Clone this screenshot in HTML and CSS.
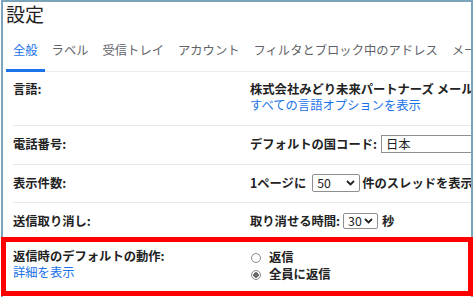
FILE: index.html
```html
<!DOCTYPE html>
<html lang="ja">
<head>
    <meta charset="UTF-8">
    <meta name="viewport" content="width=device-width, initial-scale=1.0">
    <title>設定</title>
    <link rel="stylesheet" href="styles.css">
</head>
<body>

    <div class="screen">
        <!-- Settings window -->
        <div class="window">
            <h1 class="title">設定</h1>

            <nav class="tabs">
                <a href="#" class="tab active">全般</a>
                <a href="#" class="tab">ラベル</a>
                <a href="#" class="tab">受信トレイ</a>
                <a href="#" class="tab">アカウント</a>
                <a href="#" class="tab">フィルタとブロック中のアドレス</a>
                <a href="#" class="tab">メール転送と POP/IMAP</a>
            </nav>

            <div class="row row-lang">
                <div class="label">言語:</div>
                <div class="value">
                    <div class="strong">株式会社みどり未来パートナーズ メール の表示言語:</div>
                    <a href="#" class="link">すべての言語オプションを表示</a>
                </div>
            </div>

            <div class="row row-phone">
                <div class="label">電話番号:</div>
                <div class="value inline">
                    <span class="strong">デフォルトの国コード:</span>
                    <span class="textbox">日本</span>
                </div>
            </div>

            <div class="row row-size">
                <div class="label">表示件数:</div>
                <div class="value inline">
                    <span class="strong">1ページに</span>
                    <span class="select select-50">50
                        <svg class="chevron" width="9" height="6" viewBox="0 0 9 6"><path d="M1 1l3.5 3.5L8 1" fill="none" stroke="#222" stroke-width="1.8"/></svg>
                    </span>
                    <span class="strong">件のスレッドを表示</span>
                </div>
            </div>

            <div class="row row-undo">
                <div class="label">送信取り消し:</div>
                <div class="value inline">
                    <span class="strong">取り消せる時間:</span>
                    <span class="select select-30">30
                        <svg class="chevron" width="9" height="6" viewBox="0 0 9 6"><path d="M1 1l3.5 3.5L8 1" fill="none" stroke="#222" stroke-width="1.8"/></svg>
                    </span>
                    <span class="strong">秒</span>
                </div>
            </div>

            <div class="row row-reply">
                <div class="label">
                    <div>返信時のデフォルトの動作:</div>
                    <a href="#" class="link">詳細を表示</a>
                </div>
                <div class="value">
                    <label class="radio"><input type="radio" name="reply"> <span class="strong">返信</span></label>
                    <label class="radio"><input type="radio" name="reply" checked> <span class="strong">全員に返信</span></label>
                </div>
            </div>
        </div>

        <!-- Red annotation frame -->
        <div class="callout"></div>
    </div>

</body>
</html>
```

FILE: styles.css
```css
/* Basic reset */
* {
    margin: 0;
    padding: 0;
    box-sizing: border-box;
}

body {
    font-family: "Noto Sans CJK JP", "Noto Sans", sans-serif;
    background-color: #ffffff;
    color: #222222;
    font-size: 12.3px;
}

.screen {
    position: relative;
    width: 475px;
    height: 297px;
    overflow: hidden;
}

.window {
    margin-left: 1px;
    width: 472px;
    height: 297px;
    border: 2px solid #7ba4bb;
    border-bottom: none;
    overflow: hidden;
    white-space: nowrap;
}

.title {
    font-size: 19px;
    font-weight: normal;
    line-height: 24px;
    padding-left: 3px;
    color: #222222;
}

/* Tabs */
.tabs {
    display: flex;
    margin-left: 3px;
    border-bottom: 1px solid #ececec;
}

.tab {
    padding: 16px 7px 11px;
    line-height: 16px;
    color: #5f6368;
    text-decoration: none;
    border-bottom: 3px solid transparent;
    margin-bottom: -1px;
    flex-shrink: 0;
}

.tab.active {
    color: #1a73e8;
    border-bottom-color: #1a73e8;
}

/* Setting rows */
.row {
    display: flex;
    margin-left: 10px;
    border-bottom: 1px solid #e8e8e8;
    line-height: 16px;
}

.label {
    width: 237px;
    flex-shrink: 0;
    font-weight: bold;
}

.value {
    display: flex;
    flex-direction: column;
}

.value.inline {
    flex-direction: row;
    align-items: center;
}

.strong {
    font-weight: bold;
}

.link {
    color: #1a73e8;
    text-decoration: none;
    font-weight: normal;
}

.row-lang {
    padding: 9px 0 12px;
}

.row-phone {
    padding: 9px 0 11px;
    line-height: 18px;
}

.row-size {
    padding: 9px 0 10px;
    line-height: 18px;
}

.row-undo {
    padding: 10px 0 10px;
}

.row-reply {
    padding: 8px 0 20px;
}

.row-reply .value {
    padding-top: 1px;
    line-height: 17px;
}

.textbox {
    display: inline-block;
    width: 130px;
    height: 18px;
    margin-left: 4px;
    padding-left: 4px;
    border: 1px solid #8f8f8f;
    line-height: 16px;
}

.select {
    display: inline-flex;
    align-items: center;
    justify-content: space-between;
    border: 1px solid #8f8f8f;
    border-radius: 2px;
    padding: 0 4px 0 4px;
}

.select-50 {
    width: 48px;
    height: 18px;
    margin: 0 2px 0 6px;
}

.select-30 {
    width: 35px;
    height: 16px;
    margin: 0 4px 0 3px;
}

.chevron {
    display: block;
}

/* Radio buttons */
.radio {
    display: flex;
    align-items: center;
}

.radio input {
    appearance: none;
    width: 10px;
    height: 10px;
    margin: 0 8px 0 1px;
    border: 1px solid #8a8a8a;
    border-radius: 50%;
    background-color: #ffffff;
}

.radio input:checked {
    background: radial-gradient(circle, #6b6b6b 0 2.5px, #ffffff 3px);
}

/* Annotation */
.callout {
    position: absolute;
    left: 1px;
    top: 237px;
    width: 472px;
    height: 59px;
    border: 5px solid #ff0000;
}
```
